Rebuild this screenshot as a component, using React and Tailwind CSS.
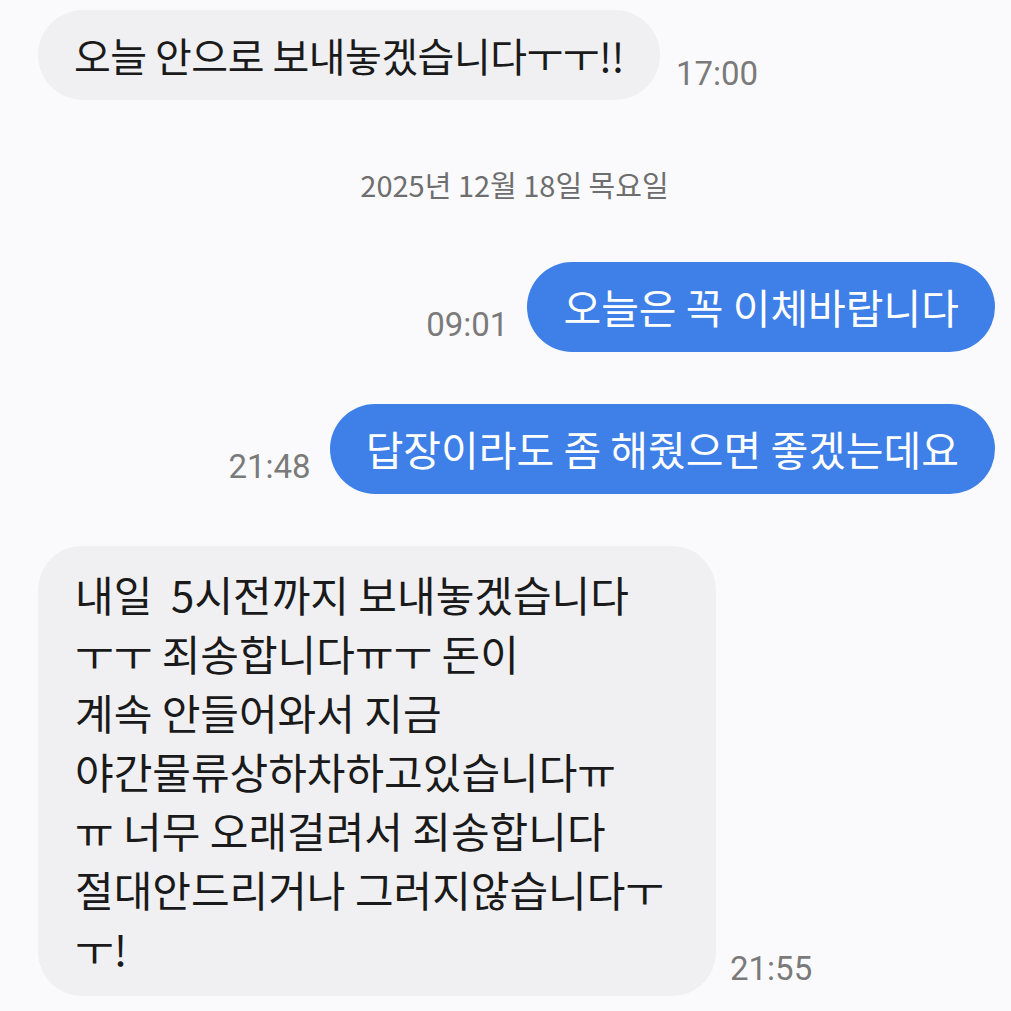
const kr = { fontFamily: '"Noto Sans CJK KR", "Noto Sans", sans-serif' };
const num = { fontFamily: 'Roboto, "Noto Sans CJK KR", sans-serif' };

const longLines = [
  "내일  5시전까지 보내놓겠습니다",
  "ㅜㅜ 죄송합니다ㅠㅜ 돈이",
  "계속 안들어와서 지금",
  "야간물류상하차하고있습니다ㅠ",
  "ㅠ 너무 오래걸려서 죄송합니다",
  "절대안드리거나 그러지않습니다ㅜ",
  "ㅜ!",
];

const Time = ({ children, className = "" }) => (
  <span style={num} className={`text-[33px] leading-none text-[#7a7a7a] ${className}`}>
    {children}
  </span>
);

const Incoming = ({ text, time }) => (
  <div className="flex items-end gap-[16px]">
    <div
      style={kr}
      className="h-[90px] flex items-center px-[36px] rounded-full bg-[#f0f0f2] text-[40px] tracking-[-0.5px] text-[#1a1a1a] whitespace-nowrap"
    >
      {text}
    </div>
    <Time className="mb-[10px]">{time}</Time>
  </div>
);

const Outgoing = ({ text, time }) => (
  <div className="flex items-end justify-end gap-[19px]">
    <Time className="mb-[11px]">{time}</Time>
    <div
      style={kr}
      className="h-[90px] flex items-center px-[36px] rounded-full bg-[#3e7fe8] text-[41px] text-white whitespace-nowrap"
    >
      {text}
    </div>
  </div>
);

export default function App() {
  return (
    <div className="w-full h-[1011px] overflow-hidden bg-[#fafafc] pl-[38px] pr-[16px] pt-[10px] flex flex-col">
      <Incoming text="오늘 안으로 보내놓겠습니다ㅜㅜ!!" time="17:00" />

      <div style={kr} className="mt-[66px] text-center text-[29px] leading-[36px] text-[#6e6e6e] pr-[4px]">
        2025년 12월 18일 목요일
      </div>

      <div className="mt-[60px] flex flex-col gap-[52px]">
        <Outgoing text="오늘은 꼭 이체바랍니다" time="09:01" />
        <Outgoing text="답장이라도 좀 해줬으면 좋겠는데요" time="21:48" />
      </div>

      <div className="mt-[52px] flex items-end gap-[14px]">
        <div
          style={kr}
          className="w-[678px] rounded-[44px] bg-[#f0f0f2] pl-[37px] pt-[18px] pb-[19px] text-[42px] leading-[59px] text-[#1a1a1a]"
        >
          {longLines.map((line, i) => (
            <div key={i} className="whitespace-pre">
              {line}
            </div>
          ))}
        </div>
        <Time className="mb-[11px]">21:55</Time>
      </div>
    </div>
  );
}
